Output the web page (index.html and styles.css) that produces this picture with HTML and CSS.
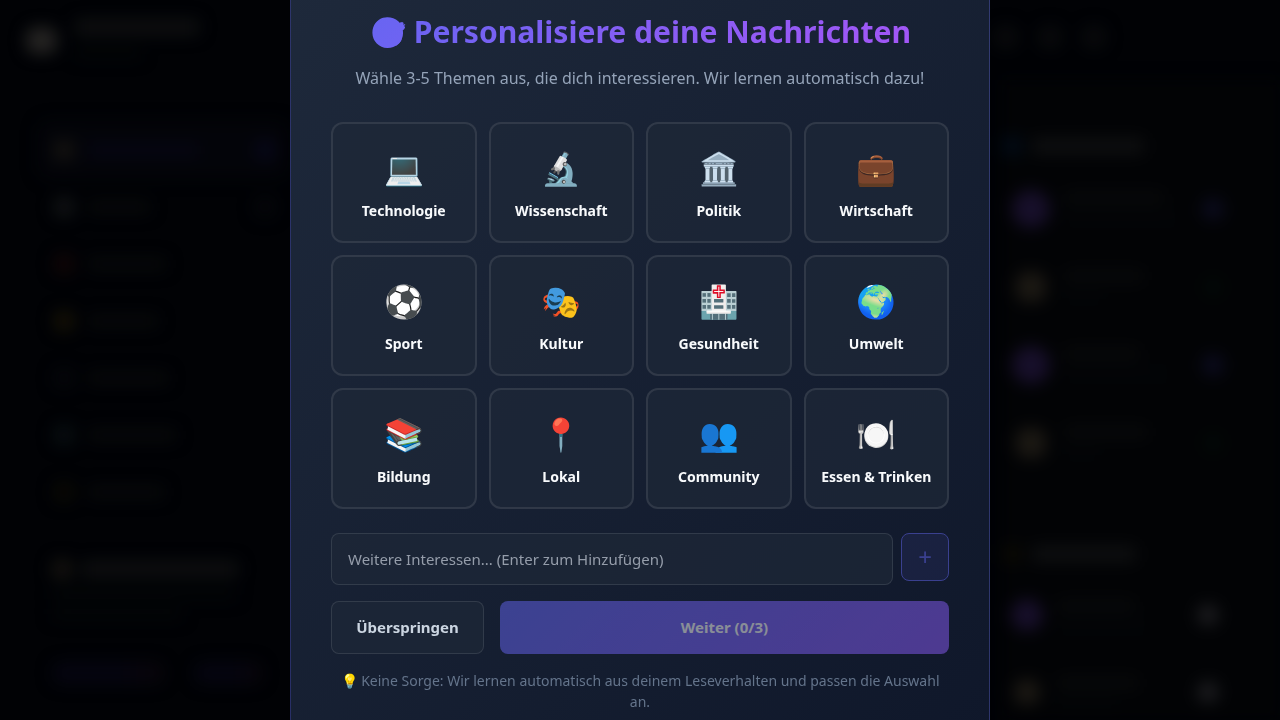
FILE: index.html
```html
<!DOCTYPE html>
<html lang="de">
<head>
<meta charset="utf-8">
<title>Personalisiere deine Nachrichten</title>
<link rel="stylesheet" href="styles.css">
</head>
<body>
<div class="backdrop" aria-hidden="true">
  <header class="topbar">
    <i class="logo"></i>
    <div class="brand"><i class="bar brand-name"></i><i class="bar faint brand-sub"></i></div>
    <div class="actions"><i class="dot"></i><i class="dot"></i><i class="dot"></i></div>
  </header>
  <div class="columns">
    <aside class="left">
      <div class="nav">
        <div class="nav-item active"><i class="glyph sand"></i><i class="bar indigo" style="width:112px"></i><i class="badge"></i></div>
        <div class="nav-item"><i class="glyph"></i><i class="bar" style="width:62px"></i><i class="badge dim"></i></div>
        <div class="nav-item"><i class="glyph red"></i><i class="bar" style="width:78px"></i></div>
        <div class="nav-item"><i class="glyph gold"></i><i class="bar" style="width:70px"></i></div>
        <div class="nav-item"><i class="glyph dim"></i><i class="bar" style="width:80px"></i></div>
        <div class="nav-item"><i class="glyph teal"></i><i class="bar" style="width:88px"></i></div>
        <div class="nav-item"><i class="glyph olive"></i><i class="bar" style="width:76px"></i></div>
      </div>
      <div class="interests">
        <div class="heading"><i class="glyph sand"></i><i class="bar strong" style="width:156px"></i></div>
        <i class="bar faint" style="width:184px"></i>
        <i class="bar faint" style="width:130px"></i>
        <div class="tags"><i class="tag" style="width:112px"></i><i class="tag" style="width:68px"></i></div>
      </div>
    </aside>
    <aside class="right">
      <div class="heading"><i class="glyph blue"></i><i class="bar strong" style="width:112px"></i></div>
      <div class="people">
        <div class="person"><i class="avatar violet"></i><div class="lines"><i class="bar" style="width:100px"></i><i class="bar faint" style="width:116px"></i></div><i class="badge"></i></div>
        <div class="person"><i class="avatar sand"></i><div class="lines"><i class="bar" style="width:80px"></i><i class="bar faint" style="width:40px"></i></div><i class="badge green"></i></div>
        <div class="person"><i class="avatar violet"></i><div class="lines"><i class="bar" style="width:76px"></i><i class="bar faint" style="width:108px"></i></div><i class="badge"></i></div>
        <div class="person"><i class="avatar sand"></i><div class="lines"><i class="bar" style="width:84px"></i><i class="bar faint" style="width:36px"></i></div><i class="badge green"></i></div>
      </div>
      <div class="heading second"><i class="glyph olive"></i><i class="bar strong" style="width:104px"></i></div>
      <div class="people">
        <div class="person compact"><i class="avatar small violet"></i><div class="lines"><i class="bar" style="width:78px"></i><i class="bar faint" style="width:92px"></i></div><i class="badge light"></i></div>
        <div class="person compact"><i class="avatar small sand"></i><div class="lines"><i class="bar" style="width:82px"></i><i class="bar faint" style="width:60px"></i></div><i class="badge light"></i></div>
      </div>
    </aside>
  </div>
</div>

<div class="overlay">
  <main class="modal">
    <h1 class="title">🎯 Personalisiere deine Nachrichten</h1>
    <p class="subtitle">Wähle 3-5 Themen aus, die dich interessieren. Wir lernen automatisch dazu!</p>
    <div class="grid">
      <button class="card"><span class="emoji">💻</span><span class="label">Technologie</span></button>
      <button class="card"><span class="emoji">🔬</span><span class="label">Wissenschaft</span></button>
      <button class="card"><span class="emoji">🏛️</span><span class="label">Politik</span></button>
      <button class="card"><span class="emoji">💼</span><span class="label">Wirtschaft</span></button>
      <button class="card"><span class="emoji">⚽</span><span class="label">Sport</span></button>
      <button class="card"><span class="emoji">🎭</span><span class="label">Kultur</span></button>
      <button class="card"><span class="emoji">🏥</span><span class="label">Gesundheit</span></button>
      <button class="card"><span class="emoji">🌍</span><span class="label">Umwelt</span></button>
      <button class="card"><span class="emoji">📚</span><span class="label">Bildung</span></button>
      <button class="card"><span class="emoji">📍</span><span class="label">Lokal</span></button>
      <button class="card"><span class="emoji">👥</span><span class="label">Community</span></button>
      <button class="card"><span class="emoji">🍽️</span><span class="label">Essen &amp; Trinken</span></button>
    </div>
    <div class="custom">
      <input class="field" type="text" placeholder="Weitere Interessen... (Enter zum Hinzufügen)">
      <button class="add" disabled>+</button>
    </div>
    <div class="footer">
      <button class="skip">Überspringen</button>
      <button class="next" disabled>Weiter (0/3)</button>
    </div>
    <p class="note">💡 Keine Sorge: Wir lernen automatisch aus deinem Leseverhalten und passen die Auswahl an.</p>
  </main>
</div>
</body>
</html>
```

FILE: styles.css
```css
* { box-sizing: border-box; margin: 0; padding: 0; }
body { height: 720px; overflow: hidden; background: #010205; font-family: "Noto Sans", sans-serif; line-height: 1.5; color: #f8fafc; }
button, input { font-family: inherit; }

.backdrop { height: 720px; overflow: hidden; filter: blur(8px); }
.backdrop i { display: block; flex: none; }
.topbar { height: 80px; display: flex; align-items: center; padding-left: 26px; }
.logo { width: 31px; height: 27px; border-radius: 10px; background: #242322; }
.brand { margin-left: 18px; display: grid; gap: 13px; margin-top: -3px; }
.brand-name { width: 124px; }
.brand-sub { width: 66px; }
.actions { display: flex; gap: 20px; margin-left: 795px; margin-top: -6px; }
.actions .dot { width: 24px; height: 24px; border-radius: 50%; background: #090a0c; }
.bar { height: 12px; border-radius: 4px; background: #08090a; }
.bar.strong { height: 16px; background: #0e0f10; }
.bar.brand-name { height: 16px; background: #0e0f10; }
.bar.faint { height: 10px; background: #030507; }
.bar.indigo { background: #060613; }
.columns { display: flex; justify-content: space-between; }
.left { width: 250px; margin-left: 38px; padding-top: 41px; }
.nav-item { height: 57px; display: flex; align-items: center; gap: 14px; padding: 0 12px 0 16px; border-radius: 12px; }
.nav-item.active { background: #030409; }
.glyph { width: 20px; height: 20px; border-radius: 6px; background: #101214; }
.badge { width: 22px; height: 22px; border-radius: 50%; margin-left: auto; background: #0b0b1e; }
.nav .badge { background: #070718; }
.dim, .nav .badge.dim { background: #05060a; }
.sand { background: #14120f; }
.red { background: #100506; }
.gold { background: #151105; }
.teal { background: #080e11; }
.olive { background: #0a0904; }
.blue { background: #020b16; }
.violet { background: #170f2a; }
.interests { padding: 39px 0 0 14px; display: grid; gap: 10px; }
.heading { display: flex; align-items: center; gap: 10px; }
.interests .heading { height: 20px; }
.tags { display: flex; gap: 30px; margin-top: 33px; }
.tag { height: 22px; border-radius: 11px; background: linear-gradient(90deg, #050510 60%, #09050a); }
.right { width: 278px; padding-top: 56px; background: #020305; }
.people { margin-top: 14px; }
.person { height: 78px; display: flex; align-items: center; gap: 14px; padding: 0 56px 0 10px; }
.person.compact { height: 77px; padding: 0 61px 0 9px; }
.avatar { width: 38px; height: 38px; border-radius: 50%; }
.avatar.small { width: 32px; height: 32px; }
.avatar.sand { border-radius: 14px; transform: scale(.8); background: #1b1813; }
.lines { display: grid; gap: 9px; margin-top: -4px; width: 120px; }
.compact .lines { margin-top: 2px; }
.badge.green { background: #020806; }
.badge.light { background: #1b1b1e; }
.heading.second { margin-top: 62px; }
.second + .people { margin-top: 12px; }

.overlay { position: fixed; inset: 0; display: flex; align-items: center; justify-content: center; overflow: hidden; }
.modal { width: 700px; height: 786px; flex: none; padding: 40px; border: 1px solid rgba(99,102,241,.3); border-radius: 24px; background: linear-gradient(135deg, #1e293b 0%, #0f172a 100%); text-align: center; }
.title { font-size: 30.1px; font-weight: 700; line-height: 48px; background: linear-gradient(135deg, #6366f1, #a855f7); -webkit-background-clip: text; background-clip: text; -webkit-text-fill-color: transparent; }
.subtitle { margin-top: 10px; font-size: 16px; line-height: 24px; color: #94a3b8; }
.grid { margin-top: 32px; display: grid; grid-template-columns: repeat(4, 1fr); gap: 12px; }
.card { height: 121px; display: flex; flex-direction: column; align-items: center; justify-content: center; gap: 8px; border: 2px solid rgba(255,255,255,.09); border-radius: 12px; background: rgba(30,40,55,.7); color: #f8fafc; }
.emoji { font-size: 32px; line-height: 48px; }
.label { font-size: 14px; line-height: 21px; font-weight: 700; white-space: nowrap; }
.custom { margin-top: 24px; display: flex; align-items: flex-start; gap: 8px; }
.field { flex: 1; min-width: 0; height: 52px; padding: 0 16px; border: 1px solid rgba(255,255,255,.1); border-radius: 8px; background: rgba(30,40,55,.7); color: #f8fafc; font-size: 15px; }
.field::placeholder { color: #959daa; }
.add { width: 48px; height: 48px; padding-bottom: 2px; border: 1px solid #6366f1; border-radius: 8px; background: rgba(99,102,241,.2); color: #6366f1; font-size: 24px; opacity: .5; }
.footer { margin-top: 16px; display: flex; gap: 16px; }
.skip, .next { height: 53px; padding-bottom: 1px; border-radius: 8px; font-size: 15px; font-weight: 700; }
.skip { width: 153px; border: 1px solid rgba(255,255,255,.1); background: rgba(30,40,55,.7); color: #cbd5e1; }
.next { flex: 1; border: 0; background: linear-gradient(135deg, #6366f1, #8b5cf6); color: #fff; opacity: .5; }
.note { margin-top: 16px; font-size: 14px; line-height: 21px; color: #64748b; }
```
